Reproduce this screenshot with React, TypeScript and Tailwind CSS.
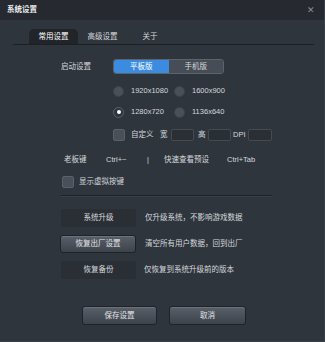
import { useState } from 'react';

const font = { fontFamily: '"Liberation Sans", "Noto Sans CJK SC", sans-serif' };

function Radio({ checked, label, onClick }: { checked: boolean; label: string; onClick: () => void }) {
  return (
    <button type="button" onClick={onClick} className="flex items-center w-[61px] h-full">
      <span className={`w-[11px] h-[11px] rounded-full flex items-center justify-center border ${checked ? 'bg-[#30353c] border-[#5a616a]' : 'bg-[#4a5058] border-[#3e444b]'}`}>
        {checked && <span className="w-[4px] h-[4px] rounded-full bg-white" />}
      </span>
      <span className="ml-[7px]">{label}</span>
    </button>
  );
}

function Box({ checked, onClick }: { checked: boolean; onClick: () => void }) {
  return (
    <button
      type="button"
      onClick={onClick}
      className="w-[12px] h-[12px] rounded-[2px] bg-[#4a5058] border border-[#5a616a] flex items-center justify-center text-[8px] text-white"
    >
      {checked ? '✓' : ''}
    </button>
  );
}

const raised =
  'rounded-[3px] border border-[#1f2328] bg-gradient-to-b from-[#59606a] to-[#3d434b] shadow-[inset_0_1px_0_#6c737c] text-[#e4e6e8]';
const flat = 'rounded-[3px] bg-[#2a2f36] text-[#d5d8dc]';

export default function App() {
  const [mode, setMode] = useState('tablet');
  const [res, setRes] = useState('1280x720');
  const [custom, setCustom] = useState(false);
  const [showKeys, setShowKeys] = useState(false);

  return (
    <div style={font} className="w-[325px] h-[342px] bg-[#2f353d] text-[#d5d8dc] text-[7.5px] flex flex-col border-r border-b border-[#3a4048]">
      {/* 标题栏 */}
      <div className="h-[20px] shrink-0 bg-[#262a30] flex items-center justify-between pl-[7px] pr-[9px]">
        <span className="font-bold text-[#eceef0]">系统设置</span>
        <span className="text-[9px] text-[#8a9098] leading-none">✕</span>
      </div>

      {/* 标签页 */}
      <div className="mt-[9px] ml-[13px] mr-[10px] h-[16px] flex items-end border-b border-[#1c1f23] pl-[16px]">
        <div className="w-[49px] h-[15px] rounded-t-[5px] bg-[#21252a] flex items-center justify-center text-white">常用设置</div>
        <div className="w-[49px] h-[15px] flex items-center justify-center">高级设置</div>
        <div className="w-[46px] h-[15px] flex items-center justify-center">关于</div>
      </div>

      {/* 启动设置 */}
      <div className="mt-[14px] h-[15px] flex items-center pl-[61px]">
        <span className="w-[52px]">启动设置</span>
        <div className="flex h-[15px] w-[111px] rounded-[3px] border border-[#5b636c] overflow-hidden">
          <button type="button" onClick={() => setMode('tablet')} className={`flex-1 ${mode === 'tablet' ? 'bg-[#3b8ce0] text-white' : 'bg-[#464d56]'}`}>
            平板版
          </button>
          <button type="button" onClick={() => setMode('phone')} className={`flex-1 ${mode === 'phone' ? 'bg-[#3b8ce0] text-white' : 'bg-[#464d56]'}`}>
            手机版
          </button>
        </div>
      </div>

      <div className="mt-[11px] h-[12px] flex pl-[113px]">
        <Radio checked={res === '1920x1080'} label="1920x1080" onClick={() => setRes('1920x1080')} />
        <Radio checked={res === '1600x900'} label="1600x900" onClick={() => setRes('1600x900')} />
      </div>
      <div className="mt-[9px] h-[12px] flex pl-[113px]">
        <Radio checked={res === '1280x720'} label="1280x720" onClick={() => setRes('1280x720')} />
        <Radio checked={res === '1136x640'} label="1136x640" onClick={() => setRes('1136x640')} />
      </div>

      {/* 自定义 */}
      <div className="mt-[11px] h-[12px] flex items-center pl-[113px]">
        <Box checked={custom} onClick={() => setCustom(!custom)} />
        <span className="ml-[6px] w-[29px]">自定义</span>
        <span className="w-[11px]">宽</span>
        <input className="w-[23px] h-[12px] rounded-[2px] bg-[#2a2f36] border border-[#454b53] outline-none" />
        <span className="ml-[4px] w-[10px]">高</span>
        <input className="w-[23px] h-[12px] rounded-[2px] bg-[#2a2f36] border border-[#454b53] outline-none" />
        <span className="ml-[2px] w-[15px]">DPI</span>
        <input className="w-[24px] h-[12px] rounded-[2px] bg-[#2a2f36] border border-[#454b53] outline-none" />
      </div>

      {/* 快捷键 */}
      <div className="mt-[13px] h-[12px] flex items-center pl-[64px]">
        <span className="w-[42px]">老板键</span>
        <span className="w-[41px]">Ctrl+~</span>
        <span className="w-[17px]">|</span>
        <span className="w-[63px]">快速查看预设</span>
        <span>Ctrl+Tab</span>
      </div>

      <div className="mt-[10px] h-[12px] flex items-center pl-[62px]">
        <Box checked={showKeys} onClick={() => setShowKeys(!showKeys)} />
        <span className="ml-[5px]">显示虚拟按键</span>
      </div>

      <div className="mt-[7px] ml-[61px] w-[211px] border-t border-[#1e2226] border-b border-b-[#3a4048]" />

      {/* 系统操作 */}
      <div className="mt-[12px] h-[18px] flex items-center pl-[61px]">
        <button type="button" className={`w-[75px] h-[18px] ${flat}`}>系统升级</button>
        <span className="ml-[9px]">仅升级系统，不影响游戏数据</span>
      </div>
      <div className="mt-[8px] h-[18px] flex items-center pl-[60px]">
        <button type="button" className={`w-[76px] h-[18px] ${raised}`}>恢复出厂设置</button>
        <span className="ml-[9px]">清空所有用户数据，回到出厂</span>
      </div>
      <div className="mt-[8px] h-[18px] flex items-center pl-[61px]">
        <button type="button" className={`w-[75px] h-[18px] ${flat}`}>恢复备份</button>
        <span className="ml-[8px]">仅恢复到系统升级前的版本</span>
      </div>

      {/* 底部按钮 */}
      <div className="mt-[27px] h-[19px] flex pl-[82px] gap-[12px]">
        <button type="button" className={`w-[75px] h-[19px] ${raised}`}>保存设置</button>
        <button type="button" className={`w-[77px] h-[19px] ${raised}`}>取消</button>
      </div>
    </div>
  );
}
